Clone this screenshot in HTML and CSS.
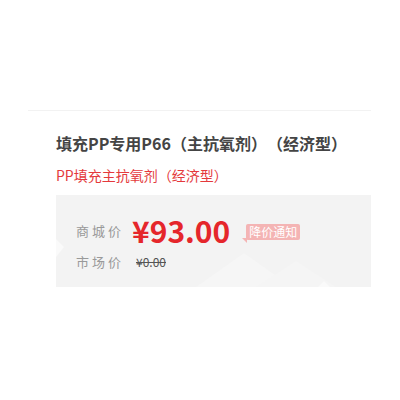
FILE: index.html
```html
<!DOCTYPE html>
<html lang="zh-CN">
<head>
  <meta charset="UTF-8">
  <meta name="viewport" content="width=device-width, initial-scale=1.0">
  <title>填充PP专用P66</title>
  <link rel="stylesheet" href="styles.css">
</head>
<body>
  <div class="product">
    <h1 class="title">填充PP专用P66（主抗氧剂）（经济型）</h1>
    <p class="subtitle">PP填充主抗氧剂（经济型）</p>

    <div class="price-box">
      <svg class="deco" width="315" height="92" viewBox="0 0 315 92" aria-hidden="true">
        <polygon points="0,44 8,52 0,62" fill="#fafafa" />
        <polygon points="140,92 188,58 236,92" fill="#f6f6f6" />
        <polygon points="200,92 240,66 280,92" fill="#f5f5f5" />
        <polygon points="262,92 268,86 274,92" fill="#fafafa" />
      </svg>
      <div class="row">
        <span class="label">商城价</span>
        <span class="price">¥93.00</span>
        <span class="notify">降价通知</span>
      </div>
      <div class="row">
        <span class="label">市场价</span>
        <span class="old-price">¥0.00</span>
      </div>
    </div>
  </div>
</body>
</html>
```

FILE: styles.css
```css
* {
  margin: 0;
  padding: 0;
  box-sizing: border-box;
}
body {
  font-family: "Noto Sans CJK SC", "Noto Sans", Arial, sans-serif;
  background-color: #fff;
  color: #333;
  text-spacing-trim: space-all;
}
.product {
  margin: 110px 29px 0 28px;
  padding: 20px 0 0 28px;
  border-top: 1px solid #f2f2f2;
}
.title {
  font-size: 16px;
  font-weight: bold;
  line-height: 24px;
  color: #444;
}
.subtitle {
  margin-top: 10px;
  font-size: 14px;
  line-height: 20px;
  color: #e4393c;
}
.price-box {
  position: relative;
  margin-top: 10px;
  width: 315px;
  height: 92px;
  padding: 17px 0 0 20px;
  background-color: #f3f3f3;
  overflow: hidden;
}
.deco {
  position: absolute;
  left: 0;
  top: 0;
}
.row {
  position: relative;
  display: flex;
  align-items: center;
}
.row + .row {
  height: 26px;
}
.label {
  width: 56px;
  font-size: 13px;
  letter-spacing: 3px;
  color: #999;
}
.price {
  font-size: 30px;
  font-weight: bold;
  line-height: 36px;
  color: #e5262b;
}
.notify {
  position: relative;
  margin-left: 16px;
  margin-top: 3px;
  padding: 0 3px;
  font-size: 12px;
  line-height: 16px;
  color: #fff;
  background-color: #f4b4b4;
  border-radius: 2px;
}
.notify::before {
  content: "";
  position: absolute;
  left: -4px;
  bottom: -3px;
  border-top: 5px solid #f4b4b4;
  border-left: 5px solid transparent;
}
.old-price {
  margin-left: 4px;
  font-size: 12px;
  color: #555;
  text-decoration: line-through;
}
```
